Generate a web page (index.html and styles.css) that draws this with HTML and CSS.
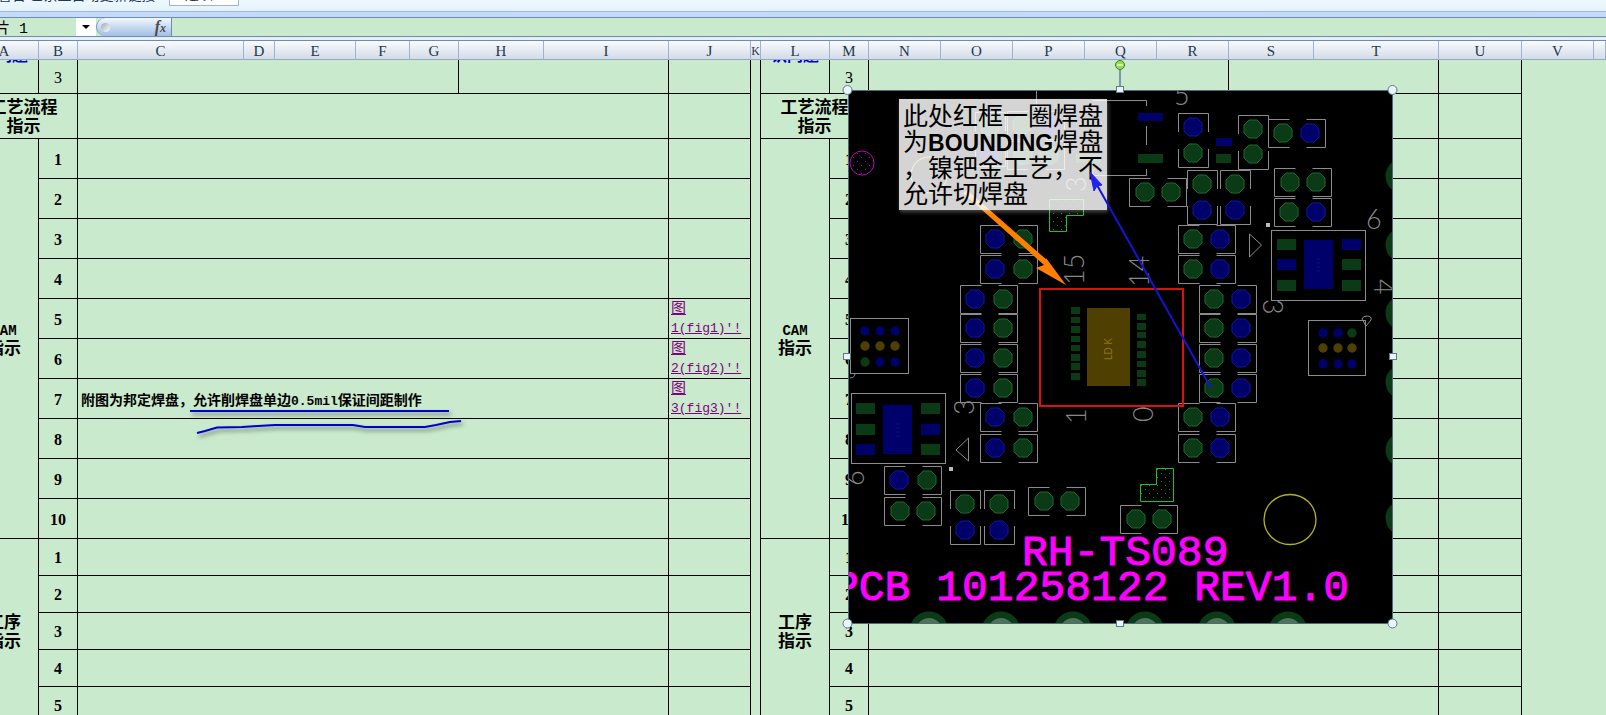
FILE: index.html
```html
<!DOCTYPE html>
<html lang="zh-CN">
<head>
  <meta charset="UTF-8" />
  <title>工艺指示</title>
  <link rel="stylesheet" href="styles.css">
</head>
<body>

  <header class="message-bar">
    <span class="message">安全警告 已禁止自动更新链接</span>
    <button type="button" class="options-button">选项...</button>
  </header>

  <div class="formula-bar">
    <input type="text" class="name-box" value="图片 1" aria-label="名称框">
    <button type="button" class="name-arrow" aria-label="展开名称框"></button>
    <button type="button" class="fx-button" aria-label="插入函数">
      <span class="fx-dot"></span>
      <span class="fx-text">f<small>x</small></span>
    </button>
    <input type="text" class="formula-input" aria-label="编辑栏">
  </div>

  <main class="sheet">
    <table class="grid">
      <colgroup>
        <col class="w69"><col class="w39"><col class="w166"><col class="w31"><col class="w81"><col class="w54"><col class="w49"><col class="w85"><col class="w125"><col class="w82"><col class="w10">
        <col class="w69"><col class="w39"><col class="w72"><col class="w72"><col class="w72"><col class="w72"><col class="w72"><col class="w85"><col class="w125"><col class="w83"><col class="w72"><col>
      </colgroup>
      <thead>
        <tr>
          <th>A</th><th>B</th><th>C</th><th>D</th><th>E</th><th>F</th><th>G</th><th>H</th><th>I</th><th>J</th><th class="tight">K</th>
          <th>L</th><th>M</th><th>N</th><th>O</th><th>P</th><th>Q</th><th>R</th><th>S</th><th>T</th><th>U</th><th>V</th><th></th>
        </tr>
      </thead>
      <tbody>
        <tr class="row-top">
          <td><div class="scrolled"><span>认问题</span></div></td><td class="num plain">3</td><td colspan="5"></td><td colspan="2"></td><td></td><td class="gap"></td>
          <td><div class="scrolled"><span>认问题</span></div></td><td class="num plain">3</td><td colspan="5"></td><td colspan="2"></td><td></td><td class="blank" colspan="2"></td>
        </tr>
        <tr class="row-flow">
          <td class="label" colspan="2">工艺流程<br>指示</td><td colspan="7"></td><td></td><td class="gap"></td>
          <td class="label" colspan="2">工艺流程<br>指示</td><td colspan="7"></td><td></td><td class="blank" colspan="2"></td>
        </tr>
        <tr class="row-cam">
          <td class="label" rowspan="10"><span class="latin">CAM</span><br>指示</td><td class="num">1</td><td colspan="7"></td><td></td><td class="gap"></td>
          <td class="label" rowspan="10"><span class="latin">CAM</span><br>指示</td><td class="num">1</td><td colspan="7"></td><td></td><td class="blank" colspan="2"></td>
        </tr>
        <tr class="row-cam">
          <td class="num">2</td><td colspan="7"></td><td></td><td class="gap"></td>
          <td class="num">2</td><td colspan="7"></td><td></td><td class="blank" colspan="2"></td>
        </tr>
        <tr class="row-cam">
          <td class="num">3</td><td colspan="7"></td><td></td><td class="gap"></td>
          <td class="num">3</td><td colspan="7"></td><td></td><td class="blank" colspan="2"></td>
        </tr>
        <tr class="row-cam">
          <td class="num">4</td><td colspan="7"></td><td></td><td class="gap"></td>
          <td class="num">4</td><td colspan="7"></td><td></td><td class="blank" colspan="2"></td>
        </tr>
        <tr class="row-cam">
          <td class="num">5</td><td colspan="7"></td><td class="fig"><a href="#fig1">图<br><span>1(fig1)'!</span></a></td><td class="gap"></td>
          <td class="num">5</td><td colspan="7"></td><td></td><td class="blank" colspan="2"></td>
        </tr>
        <tr class="row-cam">
          <td class="num">6</td><td colspan="7"></td><td class="fig"><a href="#fig2">图<br><span>2(fig2)'!</span></a></td><td class="gap"></td>
          <td class="num">6</td><td colspan="7"></td><td></td><td class="blank" colspan="2"></td>
        </tr>
        <tr class="row-cam">
          <td class="num">7</td><td class="remark" colspan="7">附图为邦定焊盘，允许削焊盘单边<span>0.5mil</span>保证间距制作</td><td class="fig"><a href="#fig3">图<br><span>3(fig3)'!</span></a></td><td class="gap"></td>
          <td class="num">7</td><td colspan="7"></td><td></td><td class="blank" colspan="2"></td>
        </tr>
        <tr class="row-cam">
          <td class="num">8</td><td colspan="7"></td><td></td><td class="gap"></td>
          <td class="num">8</td><td colspan="7"></td><td></td><td class="blank" colspan="2"></td>
        </tr>
        <tr class="row-cam">
          <td class="num">9</td><td colspan="7"></td><td></td><td class="gap"></td>
          <td class="num">9</td><td colspan="7"></td><td></td><td class="blank" colspan="2"></td>
        </tr>
        <tr class="row-cam">
          <td class="num">10</td><td colspan="7"></td><td></td><td class="gap"></td>
          <td class="num">10</td><td colspan="7"></td><td></td><td class="blank" colspan="2"></td>
        </tr>
        <tr class="row-step">
          <td class="label" rowspan="5">工序<br>指示</td><td class="num">1</td><td colspan="7"></td><td></td><td class="gap"></td>
          <td class="label" rowspan="5">工序<br>指示</td><td class="num">1</td><td colspan="7"></td><td></td><td class="blank" colspan="2"></td>
        </tr>
        <tr class="row-step">
          <td class="num">2</td><td colspan="7"></td><td></td><td class="gap"></td>
          <td class="num">2</td><td colspan="7"></td><td></td><td class="blank" colspan="2"></td>
        </tr>
        <tr class="row-step">
          <td class="num">3</td><td colspan="7"></td><td></td><td class="gap"></td>
          <td class="num">3</td><td colspan="7"></td><td></td><td class="blank" colspan="2"></td>
        </tr>
        <tr class="row-step">
          <td class="num">4</td><td colspan="7"></td><td></td><td class="gap"></td>
          <td class="num">4</td><td colspan="7"></td><td></td><td class="blank" colspan="2"></td>
        </tr>
        <tr class="row-step">
          <td class="num">5</td><td colspan="7"></td><td></td><td class="gap"></td>
          <td class="num">5</td><td colspan="7"></td><td></td><td class="blank" colspan="2"></td>
        </tr>
      </tbody>
    </table>

    <!-- hand drawn underlines below remark 7 -->
    <svg class="scribble" viewBox="185 400 290 50" aria-hidden="true">
      <path d="M190 411H449"/>
      <path d="M197 433L205 431L217 427.500L242 427L275 425H353L365 427H425L436 425L450 422L461 421"/>
    </svg>

    <div class="picture">
      <svg class="board" viewBox="848 90 545 534" role="img" aria-label="PCB">
        <defs>
          <polygon id="pad" points="-4,-9 4,-9 9,-4 9,4 4,9 -4,9 -9,4 -9,-4"/>
          <path id="fh" class="silk" d="M-7.500 -13.500H-28.500V14.500H-7.500M9.500 -13.500H28.500V14.500H9.500"/>
          <path id="fv" class="silk" d="M-14.500 -8V-26.500H15.500V-8M-14.500 9V27.500H15.500V9"/>
          <g id="hbg"><use href="#fh"/><use href="#pad" x="-14" class="b"/><use href="#pad" x="14" class="g"/></g>
          <g id="hgb"><use href="#fh"/><use href="#pad" x="-14" class="g"/><use href="#pad" x="13" class="b"/></g>
          <g id="hgg"><use href="#fh"/><use href="#pad" x="-13" class="g"/><use href="#pad" x="13" class="g"/></g>
          <g id="vgb"><use href="#fv"/><use href="#pad" y="-13" class="g"/><use href="#pad" y="13" class="b"/></g>
          <g id="vbg"><use href="#fv"/><use href="#pad" y="-13" class="b"/><use href="#pad" y="13" class="g"/></g>
          <g id="vgg"><use href="#fv"/><use href="#pad" y="-13" class="g"/><use href="#pad" y="12" class="g"/></g>
          <circle id="dot" r="4.700"/>
          <g id="hole"><circle r="19.500" fill="#0b3a17"/><circle r="13" fill="#4f7358"/></g>
          <pattern id="gdots" width="8" height="8" patternUnits="userSpaceOnUse"><rect x="1" y="1" width="1" height="1" fill="#1c8a1c"/><rect x="5" y="5" width="1" height="1" fill="#1c8a1c"/></pattern>
          <pattern id="mdots" width="8" height="8" patternUnits="userSpaceOnUse"><rect x="1" y="1" width="1" height="1" fill="#a0a"/><rect x="5" y="5" width="1" height="1" fill="#a0a"/></pattern>
        </defs>
        <rect x="848" y="90" width="545" height="534" fill="#000"/>

        <!-- two-pad parts -->
        <use href="#hbg" x="1009" y="239"/><use href="#hbg" x="1009" y="269"/>
        <use href="#hbg" x="989" y="299"/><use href="#hbg" x="989" y="328"/><use href="#hbg" x="989" y="358"/><use href="#hbg" x="989" y="388"/>
        <use href="#hbg" x="1009" y="417"/><use href="#hbg" x="1009" y="448"/>
        <use href="#hbg" x="913" y="480"/><use href="#hgg" x="913" y="511"/>
        <use href="#vgb" x="965" y="517"/><use href="#vgb" x="999" y="517"/>
        <use href="#hgg" x="1057" y="501"/><use href="#hgg" x="1149" y="519"/>
        <use href="#hgb" x="1207" y="239"/><use href="#hgb" x="1207" y="269"/>
        <use href="#hgb" x="1228" y="299"/><use href="#hgb" x="1228" y="328"/><use href="#hgb" x="1228" y="358"/><use href="#hgb" x="1228" y="388"/>
        <use href="#hgb" x="1207" y="417"/><use href="#hgb" x="1207" y="448"/>
        <use href="#hgg" x="1158" y="192"/><use href="#vgb" x="1202" y="197"/><use href="#vgb" x="1235" y="197"/>
        <use href="#vbg" x="1193" y="140"/><use href="#vgg" x="1253" y="142"/><use href="#hgb" x="1297" y="133"/>
        <use href="#hgg" x="1303" y="182"/><use href="#hgb" x="1303" y="212"/>
        <use href="#vgb" x="990" y="139"/><use href="#hgb" x="1036" y="125"/><use href="#hgg" x="1036" y="155"/>

        <path class="silk" d="M1036.500 91V123M1093 100.500H1146.500V106M1146.500 126V145M1146.500 169V175.500H1093V169"/>
        <g class="blue"><rect x="1138" y="113" width="25" height="8"/><rect x="1216" y="138" width="16" height="8"/></g>
        <g class="green"><rect x="1138" y="154" width="25" height="9"/><rect x="1216" y="154" width="15" height="9"/><rect x="1076" y="154" width="25" height="9"/></g>

        <!-- 6-pin packages -->
        <rect class="silk" x="1271.500" y="230.500" width="94" height="70"/>
        <g class="green"><rect x="1277" y="239" width="19" height="11"/><rect x="1277" y="280" width="19" height="11"/><rect x="1342" y="259" width="19" height="11"/><rect x="1342" y="280" width="19" height="11"/></g>
        <g class="blue"><rect x="1277" y="259" width="19" height="11"/><rect x="1342" y="239" width="19" height="11"/><rect x="1304" y="240" width="29" height="49"/></g>
        <rect class="silk" x="851.500" y="393.500" width="94" height="70"/>
        <g class="green"><rect x="856" y="403" width="19" height="11"/><rect x="856" y="424" width="19" height="11"/><rect x="921" y="403" width="19" height="11"/><rect x="921" y="444" width="19" height="11"/></g>
        <g class="blue"><rect x="856" y="444" width="19" height="11"/><rect x="921" y="424" width="19" height="11"/><rect x="883" y="405" width="29" height="49"/></g>
        <path d="M1316 259h4M1316 263h4M1316 267h4M1316 271h4M896 424h4M896 428h4M896 432h4M896 436h4" stroke="#0c0c84"/>

        <!-- 3x3 ball grids -->
        <rect class="silk" x="850.500" y="318.500" width="58" height="55"/>
        <g class="blue"><use href="#dot" x="865" y="331"/><use href="#dot" x="880" y="331"/><use href="#dot" x="895" y="331"/><use href="#dot" x="880" y="362"/><use href="#dot" x="895" y="362"/></g>
        <g class="gold"><use href="#dot" x="865" y="346"/><use href="#dot" x="880" y="346"/><use href="#dot" x="895" y="346"/></g>
        <use class="green" href="#dot" x="865" y="362"/>
        <rect class="silk" x="1308.500" y="320.500" width="57" height="55"/>
        <g class="blue"><use href="#dot" x="1323" y="333"/><use href="#dot" x="1338" y="333"/><use href="#dot" x="1323" y="364"/><use href="#dot" x="1338" y="364"/><use href="#dot" x="1352" y="364"/></g>
        <g class="gold"><use href="#dot" x="1323" y="348"/><use href="#dot" x="1338" y="348"/><use href="#dot" x="1352" y="348"/></g>
        <use class="green" href="#dot" x="1352" y="333"/>

        <!-- bounding die -->
        <g class="green">
          <rect x="1071" y="307" width="9" height="7"/><rect x="1071" y="317" width="9" height="6"/><rect x="1071" y="326" width="9" height="7"/><rect x="1071" y="336" width="9" height="6"/><rect x="1071" y="345" width="9" height="6"/><rect x="1071" y="354" width="9" height="7"/><rect x="1071" y="363" width="9" height="7"/><rect x="1071" y="373" width="9" height="7"/>
          <rect x="1137" y="314" width="9" height="6"/><rect x="1137" y="323" width="9" height="7"/><rect x="1137" y="332" width="9" height="6"/><rect x="1137" y="341" width="9" height="7"/><rect x="1137" y="351" width="9" height="7"/><rect x="1137" y="361" width="9" height="6"/><rect x="1137" y="370" width="9" height="7"/><rect x="1137" y="379" width="9" height="7"/>
        </g>
        <rect class="gold" x="1087" y="308" width="43" height="78"/>
        <text class="die" transform="translate(1112 360) rotate(-90)">LD K</text>
        <rect x="1040" y="289" width="143" height="117" fill="none" stroke="#dd1010" stroke-width="2"/>

        <!-- marks -->
        <circle cx="862" cy="163" r="12" fill="url(#mdots)" stroke="#c000c0"/>
        <circle cx="929" cy="175" r="18" fill="none" stroke="#c8c820"/>
        <ellipse cx="1290" cy="519.500" rx="26" ry="25" fill="none" stroke="#b4b41e" stroke-width="1.300"/>
        <path d="M1049.500 199.500H1083.500V215.500H1066.500V231.500H1049.500Z" fill="url(#gdots)" stroke="#20c020"/>
        <path d="M1156.500 468.500H1173.500V501.500H1140.500V484.500H1156.500Z" fill="url(#gdots)" stroke="#20c020"/>
        <path class="silk" d="M1249.500 234L1261.500 245L1249.500 257ZM968.500 438L956 450L968.500 461Z"/>
        <rect x="1266" y="223" width="4" height="4" fill="#bbb"/><rect x="949" y="467" width="4" height="4" fill="#bbb"/>
        <g fill="#0b3a17"><circle cx="1403" cy="176" r="17.500"/><circle cx="1403" cy="245" r="17.500"/><circle cx="1403" cy="313" r="17.500"/><circle cx="1403" cy="382" r="17.500"/><circle cx="1403" cy="450" r="17.500"/><circle cx="1403" cy="518" r="17.500"/></g>
        <use href="#hole" x="929" y="631"/><use href="#hole" x="1001" y="631"/><use href="#hole" x="1073" y="631"/><use href="#hole" x="1145" y="631"/><use href="#hole" x="1217" y="631"/><use href="#hole" x="1288" y="631"/>

        <!-- pin numbers -->
        <g class="pin">
          <text transform="translate(1084 285) rotate(-90)">15</text>
          <text transform="translate(1149 287) rotate(-90)">14</text>
          <text transform="translate(1086 424) rotate(-90)">1</text>
          <text transform="translate(1153 422) rotate(-90)">0</text>
          <text transform="translate(974 415) rotate(-90)">3</text>
          <text transform="translate(1086 192) rotate(-90)">3</text>
          <text transform="translate(1263 299) rotate(90)">3</text>
          <text transform="translate(1374 279) rotate(90)">4</text>
          <text x="1366" y="229">6</text>
          <text x="1174" y="105">5</text>
          <text transform="translate(864 486) rotate(-90)">6</text>
        </g>
        <path class="silk" d="M1362 319Q1363 316 1367 316Q1372 316 1371 320L1366 326ZM850 378Q855 378 855 373"/>

        <text class="title" x="1022" y="565">RH-TS089</text>
        <text class="title" x="833" y="600">PCB 101258122 REV1.0</text>

        <g fill="#ff8000"><path d="M963 193L967 190L1048 261L1044 265Z"/><path d="M1046 258L1066 285L1036 268L1044 265Z"/></g>
        <rect x="848.500" y="90.500" width="544" height="533" fill="none" stroke="#4d6880"/>
      </svg>

      <div class="note">此处红框一圈焊盘<br>为<b>BOUNDING</b>焊盘<br>，镍钯金工艺，不<br>允许切焊盘</div>

      <svg class="overlay" viewBox="848 90 545 534" aria-hidden="true">
        <path d="M1211 388L1097 185" stroke="#1414d8" stroke-width="2"/>
        <path d="M1090 172L1102 185L1097 186L1094 191Z" fill="#2222f0" stroke="#2222f0"/>
        <path d="M1120 70V86" stroke="#7a95a5" stroke-width="2"/>
        <circle cx="1120" cy="65" r="4.500" fill="#8ee04a" stroke="#4c7a3c"/>
        <path d="M1117 65h6" stroke="#d4f8b4" stroke-width="2"/>
        <g fill="#e9f5fa" stroke="#5c7786">
          <circle cx="847.500" cy="90" r="4.500"/><circle cx="1392.500" cy="90" r="4.500"/><circle cx="847.500" cy="623.500" r="4.500"/><circle cx="1392.500" cy="623.500" r="4.500"/>
          <rect x="1116.500" y="86.500" width="7" height="6"/><rect x="1116.500" y="620.500" width="7" height="6"/><rect x="843.500" y="353.500" width="7" height="6"/><rect x="1389.500" y="353.500" width="7" height="6"/>
        </g>
      </svg>
    </div>
  </main>

</body>
</html>
```
FILE: styles.css
```css
/* --- BASE --- */
body {
  --sheet: #caeacd;
  --bar-line: #6f8cae;
  margin: 0;
  height: 100vh;
  overflow: hidden;
  display: flex;
  flex-direction: column;
  background: var(--sheet);
  font-family: "Liberation Serif", "Noto Sans CJK SC", serif;
  color: #000;
}
input, button {
  font-family: inherit;
  margin: 0;
  padding: 0;
  border: 0;
  border-radius: 0;
  outline: none;
  box-sizing: border-box;
}

/* --- MESSAGE BAR --- */
.message-bar {
  display: flex;
  align-items: flex-end;
  flex: none;
  height: 11px;
  overflow: hidden;
  background: linear-gradient(#f0f8fe, #e2f2fb);
  border-bottom: 1px solid #9fb9d6;
}
.message {
  width: 199px;
  margin: 0 0 7px -30px;
  font-size: 14px;
  line-height: 16px;
  color: #1e395b;
  white-space: nowrap;
}
.options-button {
  width: 70px;
  height: 22px;
  margin-bottom: 5px;
  flex: none;
  background: #fff;
  border: 1px solid #a0b4cc;
  font-size: 14px;
  line-height: 12px;
  color: #1e395b;
}

/* --- FORMULA BAR --- */
.formula-bar {
  display: flex;
  flex: none;
  height: 18px;
  border-top: 1px solid var(--bar-line);
  border-bottom: 1px solid var(--bar-line);
  margin-top: 5px;
  background: var(--sheet);
  position: relative;
  box-shadow: 0 -5px #c4dafa, 0 3px #e3effb;
}
.name-box {
  width: 96px;
  margin-left: -20px;
  background: transparent;
  font: 15px "Liberation Mono", "Noto Sans CJK SC", monospace;
}
.name-arrow {
  width: 20px;
  background: #fff;
  display: flex;
  align-items: center;
  justify-content: center;
}
.name-arrow::before {
  content: "";
  border: 4px solid transparent;
  border-top-color: #000;
  border-bottom: 0;
}
.fx-button {
  width: 76px;
  display: flex;
  align-items: center;
  justify-content: space-between;
  padding: 0 5px 0 4px;
  background: linear-gradient(#f4f8fd, #c8daf2 50%, #a3bfe4);
  border-left: 1px solid #7d98bd;
  border-right: 1px solid var(--bar-line);
  border-radius: 9px 0 0 9px;
}
.fx-dot {
  width: 9px;
  height: 9px;
  border-radius: 50%;
  background: linear-gradient(135deg, #9aa8b8, #fff);
}
.fx-text {
  font-size: 16px;
  line-height: 16px;
  font-weight: bold;
  font-style: italic;
  color: #4a4a4a;
}
.fx-text small { font-size: 12px; }
.formula-input { flex: 1; min-width: 0; background: transparent; }

/* --- SHEET --- */
.sheet {
  position: relative;
  flex: 1;
  min-height: 0;
  margin-top: 3px;
  overflow: hidden;
}
.grid {
  width: calc(100% + 30px);
  margin-left: -30px;
  table-layout: fixed;
  border-collapse: separate;
  border-spacing: 0;
  border-top: 1px solid var(--bar-line);
}
.w10 { width: 10px; }
.w31 { width: 31px; }
.w39 { width: 39px; }
.w49 { width: 49px; }
.w54 { width: 54px; }
.w69 { width: 69px; }
.w72 { width: 72px; }
.w81 { width: 81px; }
.w82 { width: 82px; }
.w83 { width: 83px; }
.w85 { width: 85px; }
.w125 { width: 125px; }
.w166 { width: 166px; }
th, td { padding: 0; box-sizing: border-box; }
th {
  height: 19px;
  padding-top: 2px;
  font-size: 15px;
  line-height: 16px;
  font-weight: normal;
  color: #24384a;
  background: linear-gradient(#f8fafd, #dfe5ee 70%, #d3dbe8);
  border-right: 1px solid #9eb3d0;
  border-bottom: 1px solid #93a9c8;
}
.tight { font-size: 12px; }
td {
  border-right: 1px solid #000;
  border-bottom: 1px solid #000;
}
.gap { border-bottom: 0; }
.blank { border: 0; }
.row-top { height: 34px; }
.row-flow { height: 45px; }
.row-cam { height: 40px; }
.row-step { height: 37px; }
.num {
  padding-top: 2px;
  font-size: 16px;
  line-height: 20px;
  font-weight: bold;
  text-align: center;
}
.plain { font-weight: normal; }
.label {
  padding-top: 1px;
  font-size: 17px;
  line-height: 19px;
  font-weight: bold;
  text-align: center;
}
.latin { font: bold 14px "Liberation Mono", monospace; }
.scrolled {
  height: 33px;
  overflow: hidden;
  font-size: 16px;
  line-height: 20px;
  font-weight: bold;
  text-align: center;
  color: #0000d8;
}
.scrolled span { display: block; margin-top: -14px; }
.remark {
  padding-left: 3px;
  font-size: 14px;
  font-weight: bold;
}
.remark span { font: bold 13px "Liberation Mono", monospace; }
.fig {
  padding-left: 2px;
  font-size: 15px;
  line-height: 19px;
}
.fig a { color: #800080; }
.fig span { font: 13px/19px "Liberation Mono", monospace; }

/* --- DRAWINGS OVER THE CELLS --- */
.scribble {
  position: absolute;
  left: 185px;
  top: 360px;
  width: 290px;
  height: 50px;
  fill: none;
  stroke: #0000d0;
  stroke-width: 2;
  filter: drop-shadow(2px 3px 2px rgba(0, 0, 0, 0.5));
}
.picture {
  position: absolute;
  left: 848px;
  top: 50px;
  width: 545px;
  height: 534px;
}
.board, .overlay {
  position: absolute;
  inset: 0;
  width: 100%;
  height: 100%;
}
.overlay { overflow: visible; }
.silk { fill: none; stroke: #8c8c8c; stroke-width: 1; }
.g { fill: #0b3a17; stroke: #1b6a2d; }
.b { fill: #00006a; stroke: #1414a4; }
.green { fill: #0b3a17; }
.blue { fill: #00006a; }
.gold { fill: #4f3f00; }
.pin { font-family: Lato, sans-serif; font-weight: 300; font-size: 27px; fill: #888; }
.die { font-family: "Liberation Sans", sans-serif; font-size: 10px; fill: #8a7418; }
.title { font-family: "Liberation Mono", monospace; font-size: 43px; fill: #f0f; stroke: #f0f; }
.note {
  position: absolute;
  left: 51px;
  top: 9px;
  width: 208px;
  height: 111px;
  box-sizing: border-box;
  padding: 4px;
  background: rgba(255, 255, 255, 0.83);
  box-shadow: 1px 2px 4px rgba(255, 255, 255, 0.3);
  font-family: "Liberation Sans", "Noto Sans CJK SC", sans-serif;
  font-size: 25px;
  line-height: 26px;
  white-space: nowrap;
}
.note b { font-size: 23px; line-height: 1; }
```
